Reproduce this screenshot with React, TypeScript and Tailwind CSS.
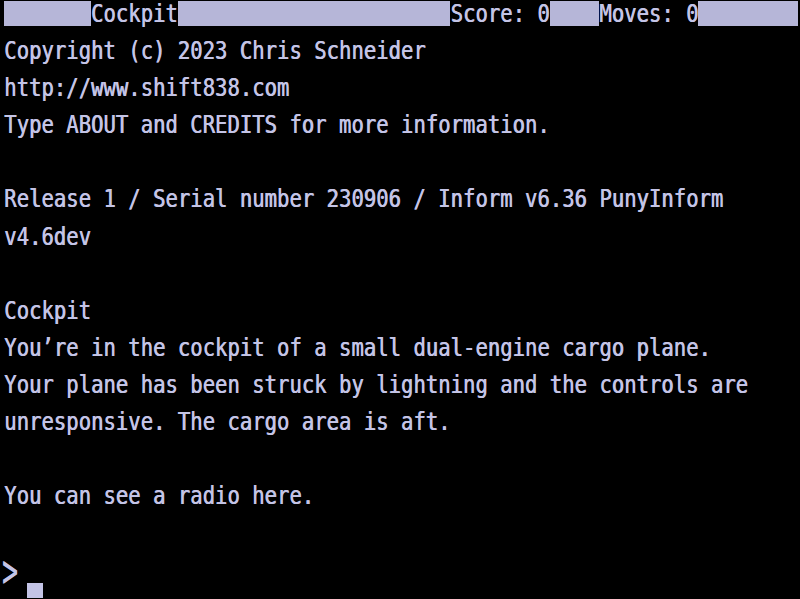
import React from "react";

const CW = 12.4;

const lines: string[] = [
  "Copyright (c) 2023 Chris Schneider",
  "http://www.shift838.com",
  "Type ABOUT and CREDITS for more information.",
  "",
  "Release 1 / Serial number 230906 / Inform v6.36 PunyInform",
  "v4.6dev",
  "",
  "Cockpit",
  "You\u2019re in the cockpit of a small dual-engine cargo plane.",
  "Your plane has been struck by lightning and the controls are",
  "unresponsive. The cargo area is aft.",
  "",
  "You can see a radio here.",
  "",
];

function Line({ children }: { children?: React.ReactNode }) {
  return (
    <div className="relative top-[1px] h-[21px] leading-[21px] whitespace-pre origin-top scale-y-[1.2]">
      {children}
    </div>
  );
}

function Bar({ cols }: { cols: number }) {
  return <div className="h-[25px] bg-[#b6b6d8] shrink-0" style={{ width: cols * CW }} />;
}

function Txt({ text }: { text: string }) {
  return (
    <div className="h-[25px] shrink-0 bg-black" style={{ width: text.length * CW }}>
      <Line>{text}</Line>
    </div>
  );
}

export default function App() {
  return (
    <div
      className="w-[800px] h-[599px] overflow-hidden bg-black text-[#c4c4e6] text-[20.6px] pl-[4px] [text-shadow:0.6px_0_0_#c4c4e6]"
      style={{ fontFamily: '"DejaVu Sans Mono", monospace' }}
    >
      <div className="h-[37.1px] pt-[1px] flex">
        <Bar cols={7} />
        <Txt text="Cockpit" />
        <Bar cols={22} />
        <Txt text="Score: 0" />
        <Bar cols={4} />
        <Txt text="Moves: 0" />
        <Bar cols={8} />
      </div>
      {lines.map((l, i) => (
        <div key={i} className="h-[37.1px] pt-[1px]">
          <Line>{l}</Line>
        </div>
      ))}
      <div className="h-[37.1px] pt-[1px] flex items-start">
        <div className="h-[27px] flex items-center -ml-[2px]" style={{ width: 2 * CW }}>
          <span className="inline-block text-[26px] leading-none scale-y-[1.75] origin-center">&gt;</span>
        </div>
        <div className="w-[16px] h-[15px] mt-[26px] bg-[#c4c4e6]" />
      </div>
    </div>
  );
}
